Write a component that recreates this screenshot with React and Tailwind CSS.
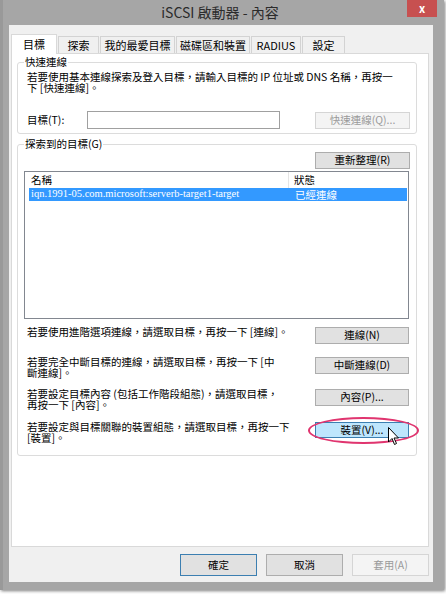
import React from 'react'

const font = { fontFamily: '"Noto Sans CJK TC", "Liberation Sans", sans-serif' }

function Btn({ children, className = '' }) {
    return <div className={"flex items-center justify-center border text-[10.5px] leading-none " + className}>{children}</div>
}

function Tab({ label, active, w }) {
    if (active) {
        return <div className={"h-[20px] bg-white border border-b-0 border-[#d9d9d9] flex items-center justify-center text-[11px] relative z-10 -mb-px " + w}>{label}</div>
    }
    return <div className={"h-[17px] bg-[#f0f0f0] border border-b-0 border-[#d3d3d3] flex items-center justify-center text-[11px] " + w}>{label}</div>
}

function ActionRow({ text, btn, mt, blue }) {
    return <div className={"h-[17px] flex items-start justify-between pl-[9px] pr-[7px] " + mt}>
        <p className="text-[10.5px] leading-[11px] whitespace-nowrap -mt-[1px]">{text}</p>
        {blue ? (
            <div className="relative">
                <Btn className="w-[94px] h-[16px] bg-[#bee6fd] border-[#3c7fb1]">{btn}</Btn>
                <div className="absolute -left-[7px] -right-[10px] -top-[5px] -bottom-[6px] rounded-[50%] border-2 border-[#e0356f]"></div>
                <svg className="absolute left-[73px] top-[5px]" width="12" height="19" viewBox="0 0 12 19">
                    <path d="M0.5 0.5 L0.5 15 L4 11.5 L6.5 17.5 L8.5 16.5 L6 11 L10.5 11 Z" fill="white" stroke="black" strokeWidth="1" strokeLinejoin="round" />
                </svg>
            </div>
        ) : (
            <Btn className="w-[94px] h-[17px] bg-[#e1e1e1] border-[#adadad]">{btn}</Btn>
        )}
    </div>
}

export default function App() {
    return <div className="w-[446px] h-[594px] bg-white" style={font}>
        <div className="w-[444px] h-[590px] bg-[#a6a6a6] border-l-[3px] border-[#999999] flex flex-col shadow-[1px_1px_3px_rgba(0,0,0,0.5)]">
            {/* title bar */}
            <div className="h-[25px] flex items-start shrink-0">
                <div className="flex-1"></div>
                <div className="text-[14px] leading-none text-[#2b2b2b] pt-[5px]">iSCSI 啟動器 - 內容</div>
                <div className="flex-1 flex justify-end pr-[7px]">
                    <div className="w-[30px] h-[17px] bg-[#c75050] flex items-center justify-center text-white text-[11px] font-bold leading-none">x</div>
                </div>
            </div>

            <div className="ml-[6px] mr-[11px] h-[557px] bg-[#f0f0f0] flex flex-col pl-[2px] pr-[4px] text-black">
                {/* tabs */}
                <div className="h-[28px] flex items-end gap-[1px]">
                    <Tab label="目標" active w="w-[46px]" />
                    <Tab label="探索" w="w-[41px]" />
                    <Tab label="我的最愛目標" w="w-[75px]" />
                    <Tab label="磁碟區和裝置" w="w-[74px]" />
                    <Tab label="RADIUS" w="w-[50px]" />
                    <Tab label="設定" w="w-[43px]" />
                </div>

                {/* panel */}
                <div className="h-[494px] bg-white border border-[#d9d9d9] pl-[5px] pr-[11px] pt-[2px]">
                    <fieldset className="border border-[#dcdcdc] rounded-[3px] pb-[4px]">
                        <legend className="ml-[6px] px-[1px] text-[10.5px] leading-[12px]">快速連線</legend>
                        <p className="pl-[9px] mt-[3px] text-[10.5px] leading-[11px] whitespace-nowrap">
                            若要使用基本連線探索及登入目標，請輸入目標的 IP 位址或 DNS 名稱，再按一<br />下 [快速連線]。
                        </p>
                        <div className="flex items-center mt-[18px] pl-[9px] pr-[6px]">
                            <span className="w-[60px] text-[10.5px]">目標(T):</span>
                            <div className="w-[193px] h-[18px] border border-[#a0a0a0] bg-white"></div>
                            <div className="flex-1"></div>
                            <Btn className="w-[95px] h-[17px] bg-[#f4f4f4] border-[#d5d5d5] text-[#9a9a9a]">快速連線(Q)...</Btn>
                        </div>
                    </fieldset>

                    <fieldset className="mt-[4px] border border-[#dcdcdc] rounded-[3px] h-[318px]">
                        <legend className="ml-[6px] px-[1px] text-[10.5px] leading-[12px]">探索到的目標(G)</legend>
                        <div className="flex justify-end pr-[6px] mt-[2px]">
                            <Btn className="w-[95px] h-[17px] bg-[#e1e1e1] border-[#adadad]">重新整理(R)</Btn>
                        </div>
                        <div className="ml-[6px] mt-[2px] w-[385px] h-[148px] border border-[#828790] bg-white">
                            <div className="flex h-[16px] items-center text-[10.5px]">
                                <div className="w-[264px] pl-[6px] border-r border-[#e5e5e5] h-full flex items-center">名稱</div>
                                <div className="pl-[5px]">狀態</div>
                            </div>
                            <div className="ml-[4px] mr-[1px] h-[13px] bg-[#3399ff] text-white flex items-center text-[10.5px]">
                                <div className="w-[260px] pl-[2px] text-[10.5px] leading-none" style={{ fontFamily: '"Liberation Serif", serif' }}>iqn.1991-05.com.microsoft:serverb-target1-target</div>
                                <div className="pl-[6px]">已經連線</div>
                            </div>
                        </div>

                        <ActionRow mt="mt-[8px]" text="若要使用進階選項連線，請選取目標，再按一下 [連線]。" btn="連線(N)" />
                        <ActionRow mt="mt-[13px]" text={<>若要完全中斷目標的連線，請選取目標，再按一下 [中<br />斷連線]。</>} btn="中斷連線(D)" />
                        <ActionRow mt="mt-[15px]" text={<>若要設定目標內容 (包括工作階段組態)，請選取目標，<br />再按一下 [內容]。</>} btn="內容(P)..." />
                        <ActionRow mt="mt-[16px]" blue text={<>若要設定與目標關聯的裝置組態，請選取目標，再按一下<br />[裝置]。</>} btn="裝置(V)..." />
                    </fieldset>
                </div>

                {/* bottom buttons */}
                <div className="flex justify-end gap-[9px] mt-[7px]">
                    <Btn className="w-[77px] h-[22px] bg-[#e1e1e1] border-[#3c7fb1]">確定</Btn>
                    <Btn className="w-[77px] h-[22px] bg-[#e1e1e1] border-[#adadad]">取消</Btn>
                    <Btn className="w-[77px] h-[22px] bg-[#f4f4f4] border-[#d5d5d5] text-[#9a9a9a]">套用(A)</Btn>
                </div>
            </div>
        </div>
    </div>
}
